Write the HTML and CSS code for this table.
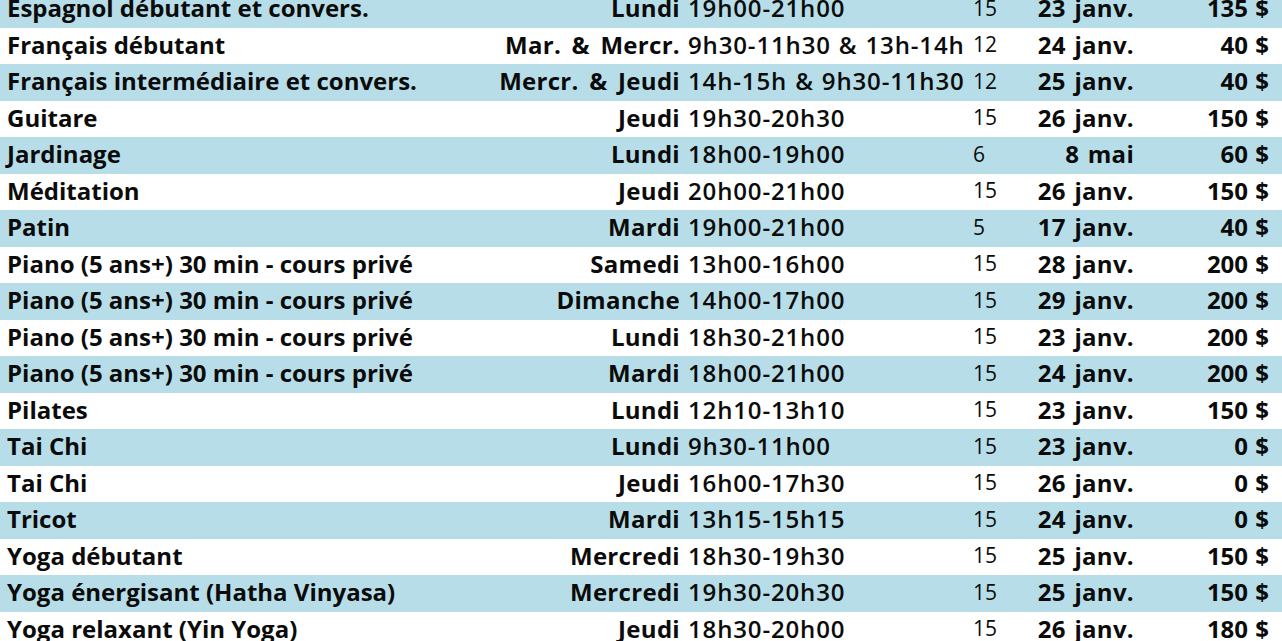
FILE: index.html
```html
<!DOCTYPE html>
<html lang="fr">
<head>
<meta charset="utf-8">
<link rel="stylesheet" href="styles.css">
</head>
<body>
<table class="courses">
<colgroup>
<col class="c-name"><col class="c-day"><col class="c-time"><col class="c-count"><col class="c-date"><col class="c-price">
</colgroup>
<tbody>
<tr class="alt"><td class="name">Espagnol débutant et convers.</td><td class="day">Lundi</td><td class="time">19h00-21h00</td><td class="count">15</td><td class="date">23 janv.</td><td class="price">135 $</td></tr>
<tr><td class="name">Français débutant</td><td class="day">Mar. &amp; Mercr.</td><td class="time">9h30-11h30 &amp; 13h-14h</td><td class="count">12</td><td class="date">24 janv.</td><td class="price">40 $</td></tr>
<tr class="alt"><td class="name">Français intermédiaire et convers.</td><td class="day">Mercr. &amp; Jeudi</td><td class="time">14h-15h &amp; 9h30-11h30</td><td class="count">12</td><td class="date">25 janv.</td><td class="price">40 $</td></tr>
<tr><td class="name">Guitare</td><td class="day">Jeudi</td><td class="time">19h30-20h30</td><td class="count">15</td><td class="date">26 janv.</td><td class="price">150 $</td></tr>
<tr class="alt"><td class="name">Jardinage</td><td class="day">Lundi</td><td class="time">18h00-19h00</td><td class="count">6</td><td class="date">8 mai</td><td class="price">60 $</td></tr>
<tr><td class="name">Méditation</td><td class="day">Jeudi</td><td class="time">20h00-21h00</td><td class="count">15</td><td class="date">26 janv.</td><td class="price">150 $</td></tr>
<tr class="alt"><td class="name">Patin</td><td class="day">Mardi</td><td class="time">19h00-21h00</td><td class="count">5</td><td class="date">17 janv.</td><td class="price">40 $</td></tr>
<tr><td class="name">Piano (5 ans+) 30 min - cours privé</td><td class="day">Samedi</td><td class="time">13h00-16h00</td><td class="count">15</td><td class="date">28 janv.</td><td class="price">200 $</td></tr>
<tr class="alt"><td class="name">Piano (5 ans+) 30 min - cours privé</td><td class="day">Dimanche</td><td class="time">14h00-17h00</td><td class="count">15</td><td class="date">29 janv.</td><td class="price">200 $</td></tr>
<tr><td class="name">Piano (5 ans+) 30 min - cours privé</td><td class="day">Lundi</td><td class="time">18h30-21h00</td><td class="count">15</td><td class="date">23 janv.</td><td class="price">200 $</td></tr>
<tr class="alt"><td class="name">Piano (5 ans+) 30 min - cours privé</td><td class="day">Mardi</td><td class="time">18h00-21h00</td><td class="count">15</td><td class="date">24 janv.</td><td class="price">200 $</td></tr>
<tr><td class="name">Pilates</td><td class="day">Lundi</td><td class="time">12h10-13h10</td><td class="count">15</td><td class="date">23 janv.</td><td class="price">150 $</td></tr>
<tr class="alt"><td class="name">Tai Chi</td><td class="day">Lundi</td><td class="time">9h30-11h00</td><td class="count">15</td><td class="date">23 janv.</td><td class="price">0 $</td></tr>
<tr><td class="name">Tai Chi</td><td class="day">Jeudi</td><td class="time">16h00-17h30</td><td class="count">15</td><td class="date">26 janv.</td><td class="price">0 $</td></tr>
<tr class="alt"><td class="name">Tricot</td><td class="day">Mardi</td><td class="time">13h15-15h15</td><td class="count">15</td><td class="date">24 janv.</td><td class="price">0 $</td></tr>
<tr><td class="name">Yoga débutant</td><td class="day">Mercredi</td><td class="time">18h30-19h30</td><td class="count">15</td><td class="date">25 janv.</td><td class="price">150 $</td></tr>
<tr class="alt"><td class="name">Yoga énergisant (Hatha Vinyasa)</td><td class="day">Mercredi</td><td class="time">19h30-20h30</td><td class="count">15</td><td class="date">25 janv.</td><td class="price">150 $</td></tr>
<tr><td class="name">Yoga relaxant (Yin Yoga)</td><td class="day">Jeudi</td><td class="time">18h30-20h00</td><td class="count">15</td><td class="date">26 janv.</td><td class="price">180 $</td></tr>
</tbody>
</table>
</body>
</html>
```

FILE: styles.css
```css
html, body {
  margin: 0;
  padding: 0;
  background: #ffffff;
}
body {
  overflow: hidden;
}
.courses {
  width: 1282px;
  margin-top: -9px;
  border-collapse: collapse;
  table-layout: fixed;
  font-family: "Open Sans", "Liberation Sans", sans-serif;
  color: #0b0b0b;
}
.c-name { width: 480px; }
.c-day { width: 204px; }
.c-time { width: 285px; }
.c-count { width: 55px; }
.c-date { width: 114px; }
.c-price { width: 144px; }

.courses tr {
  height: 36.5px;
}
.courses tr.alt {
  background: #b7dee8;
}
.courses td {
  padding: 0 4px 2px;
  white-space: nowrap;
  font-size: 24px;
  font-weight: 700;
  vertical-align: middle;
  line-height: 1;
}
.courses td.name {
  padding-left: 7px;
  text-align: left;
}
.courses td.day { text-align: right; letter-spacing: 0.3px; word-spacing: 4px; }
.courses td.time { text-align: left; font-weight: 600; letter-spacing: 0.85px; word-spacing: 1px; }
.courses td.count { text-align: left; font-weight: 400; font-size: 21px; }
.courses td.date { text-align: right; letter-spacing: 0.3px; word-spacing: 2px; }
.courses td.price { text-align: right; padding-right: 13px; word-spacing: 1px; }
```
